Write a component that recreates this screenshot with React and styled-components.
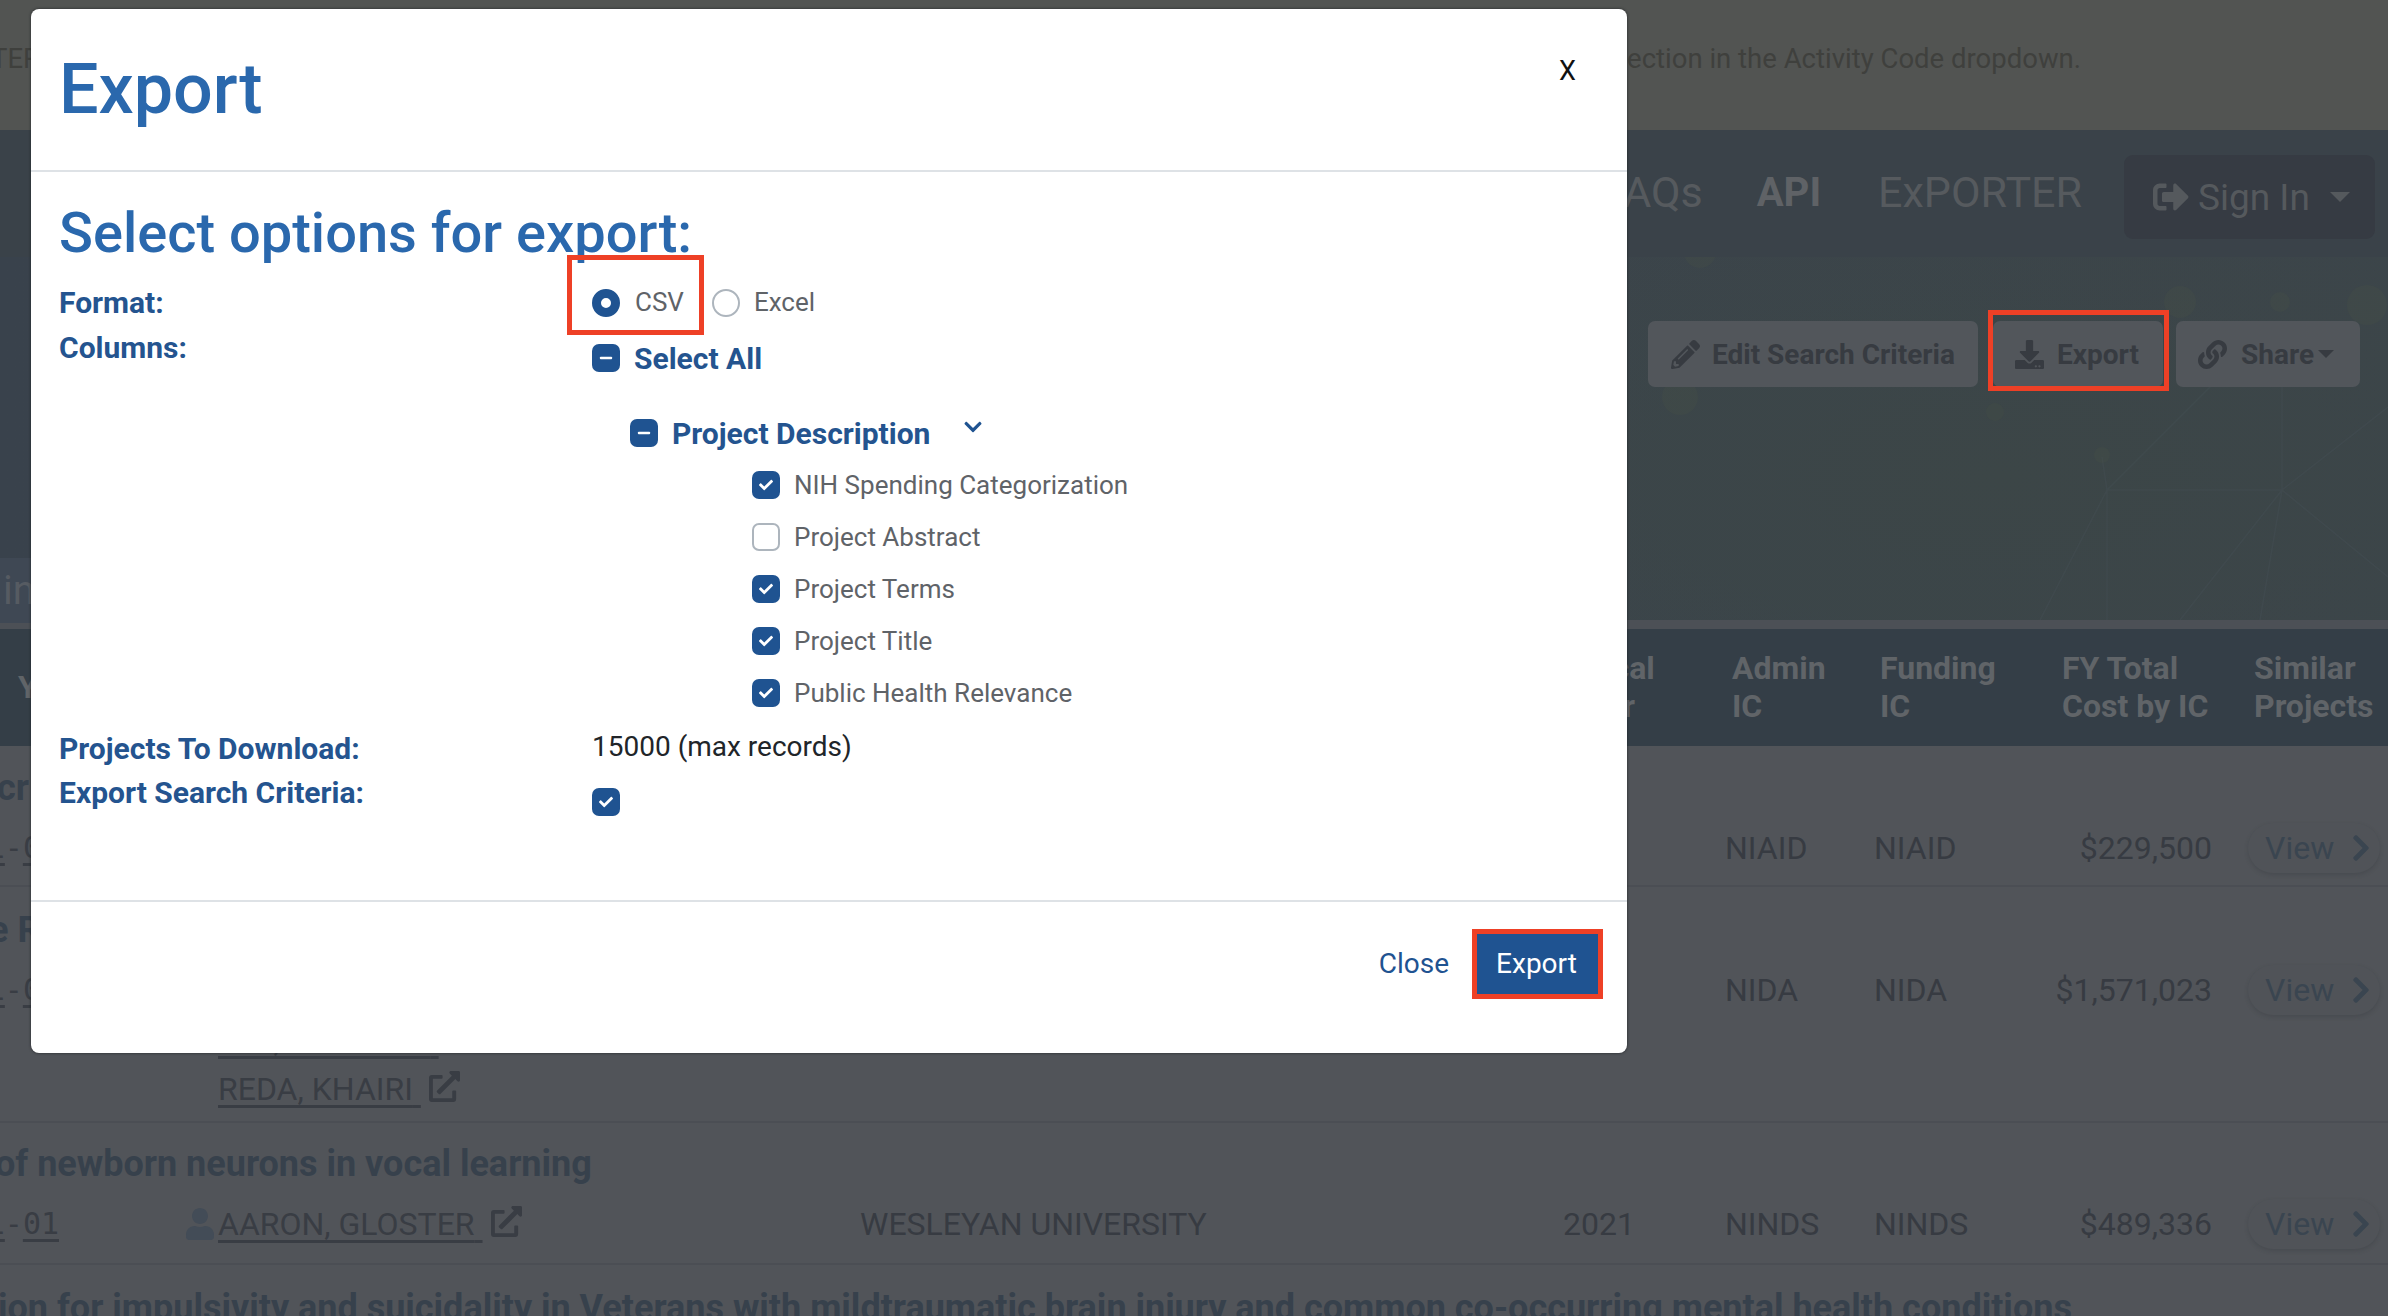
import React from "react";
import styled, { createGlobalStyle } from "styled-components";
import {
  FaPencilAlt, FaDownload, FaLink, FaSignOutAlt, FaExternalLinkAlt, FaUser,
  FaChevronDown, FaChevronRight, FaCheck, FaMinus,
} from "react-icons/fa";

const Global = createGlobalStyle`
  html, body { margin: 0; padding: 0; background: #515459; }
  body { font-family: Roboto, "Liberation Sans", sans-serif; }
  * { box-sizing: border-box; }
`;

const Page = styled.div`
  position: relative;
  width: 2388px;
  height: 1316px;
  overflow: hidden;
  background: #515459;
`;

/* ---------- dimmed page behind the dialog ---------- */
const Notice = styled.div`
  height: 130px;
  background: #525452;
  color: #3f403d;
  font-size: 27.5px;
  display: flex;
  align-items: center;
  justify-content: space-between;
  padding: 0 307px 14px 0;
  white-space: nowrap;
`;
const NoticeStart = styled.span`
  margin-left: -9px;
`;
const Nav = styled.nav`
  height: 127px;
  background: #3a4249;
  display: flex;
  align-items: center;
  justify-content: flex-end;
  padding: 7px 13px 0 0;
  gap: 57px;
`;
const NavLink = styled.a`
  color: ${(p) => (p.$strong ? "#5f6266" : "#565a5e")};
  font-size: ${(p) => (p.$strong ? 40 : 43)}px;
  font-weight: ${(p) => (p.$strong ? 700 : 400)};
  margin-bottom: 10px;
  margin-left: ${(p) => (p.$strong ? -3 : 0)}px;
`;
const SignIn = styled.button`
  width: 251px;
  height: 84px;
  margin-left: -15px;
  border: 0;
  border-radius: 9px;
  background: #363b43;
  color: #55595d;
  font: 400 37px Roboto, sans-serif;
  display: flex;
  align-items: center;
  padding: 0 0 0 29px;
  gap: 9px;
  svg { width: 36px; height: 36px; }
`;
const Caret = styled.i`
  display: inline-block;
  width: 0;
  height: 0;
  border-left: ${(p) => p.$size}px solid transparent;
  border-right: ${(p) => p.$size}px solid transparent;
  border-top: ${(p) => p.$size}px solid currentColor;
  margin-left: ${(p) => p.$gap}px;
`;
const Hero = styled.section`
  position: relative;
  height: 372px;
  border-bottom: 9px solid #4c5056;
  background:
    radial-gradient(ellipse 700px 300px at 2000px 220px, #3c4647 0%, rgba(60,70,71,0) 100%),
    linear-gradient(90deg, #39424c 0%, #3b444b 50%, #3c454a 100%);
  display: flex;
  flex-direction: column;
  justify-content: space-between;
`;
const HeroArt = styled.svg`
  position: absolute;
  inset: 0;
  width: 100%;
  height: 100%;
`;
const Tools = styled.div`
  position: relative;
  display: flex;
  justify-content: flex-end;
  gap: 13px;
  padding: 64px 28px 0 0;
`;
const ToolButton = styled.button`
  height: 66px;
  width: ${(p) => p.$w}px;
  margin-right: ${(p) => p.$after || 0}px;
  border: 0;
  border-radius: 7px;
  background: #52565b;
  color: #373b41;
  font: 700 28px Roboto, sans-serif;
  display: flex;
  align-items: center;
  padding: 0 0 0 ${(p) => p.$pad}px;
  gap: ${(p) => p.$gap}px;
  white-space: nowrap;
  svg { width: 29px; height: 29px; flex: none; }
`;
const SideTab = styled.div`
  position: relative;
  width: 31px;
  height: 65px;
  margin-bottom: -3px;
  background: #3f4854;
  color: #565b62;
  font-size: 40px;
  font-weight: 400;
  line-height: 65px;
  padding-left: 3px;
  overflow: hidden;
`;

const HeadRow = styled.div`
  height: 117px;
  padding-bottom: 2px;
  background: #343e47;
  color: #606468;
  font-size: 32px;
  font-weight: 700;
  line-height: 38px;
  display: grid;
  grid-template-columns: 18px 1552px 162px 148px 182px 192px 1fr;
  align-items: center;
`;
const HeadCell = styled.div`
  white-space: pre-line;
`;

const Row = styled.div`
  border-bottom: 2px solid #4b4e54;
  padding: ${(p) => p.$top}px 0 ${(p) => p.$bottom}px;
`;
const Title = styled.div`
  height: 44px;
  line-height: 44px;
  margin-left: ${(p) => p.$shift || 0}px;
  color: #37414c;
  font-size: 36px;
  font-weight: 700;
  white-space: nowrap;
`;
const Cells = styled.div`
  display: grid;
  grid-template-columns: 186px 674px 703px 162px 149px 166px 172px 1fr;
  margin-top: 14px;
  align-items: start;
  color: #373b42;
  font-size: 32px;
`;
const Cell = styled.div`
  height: 48px;
  line-height: 48px;
  white-space: nowrap;
  text-align: ${(p) => p.$align || "left"};
`;
const ProjectNo = styled.div`
  height: 48px;
  line-height: 48px;
  padding-right: 127px;
  display: flex;
  justify-content: flex-end;
  font-family: "DejaVu Sans Mono", monospace;
  font-size: 30px;
  white-space: nowrap;
  color: #393d44;
  u { text-underline-offset: 5px; text-decoration-thickness: 3px; }
`;
const People = styled.div`
  display: flex;
  flex-direction: column;
  gap: 1.5px;
`;
const Person = styled.div`
  position: relative;
  height: 48px;
  line-height: 48px;
  padding-left: 32px;
  display: flex;
  align-items: center;
  white-space: nowrap;
  color: #393d44;
  span { text-decoration: underline; text-underline-offset: 5px; text-decoration-thickness: 3px; white-space: pre; }
`;
const PersonIcon = styled(FaUser)`
  position: absolute;
  left: 0;
  top: 8px;
  width: 28px;
  height: 32px;
  color: #434c57;
`;
const LinkOut = styled(FaExternalLinkAlt)`
  width: 31px;
  height: 31px;
  margin: -6px 0 0 8px;
  color: #393d44;
`;
const ViewPill = styled.div`
  width: 132px;
  height: 50px;
  margin: -1px 0 0 36px;
  border-radius: 25px;
  background: #505358;
  box-shadow: 0 2px 4px rgba(40, 44, 50, 0.22);
  color: #3a4550;
  display: flex;
  align-items: center;
  padding-left: 17px;
  gap: 16px;
  svg { width: 22px; height: 30px; }
`;

/* ---------- dialog ---------- */
const Dialog = styled.div`
  position: absolute;
  left: 31px;
  top: 9px;
  width: 1596px;
  height: 1044px;
  background: #fff;
  border-radius: 8px;
  box-shadow: 0 0 3px rgba(30, 32, 36, 0.9);
  display: flex;
  flex-direction: column;
`;
const DialogHead = styled.header`
  height: 163px;
  flex: none;
  border-bottom: 2px solid #dee2e6;
  padding: 0 29px 0 28px;
  display: flex;
  justify-content: space-between;
`;
const DialogTitle = styled.h1`
  margin: 40px 0 0;
  color: #2a68ad;
  font-size: 70px;
  font-weight: 500;
  line-height: 80px;
`;
const CloseX = styled.span`
  margin: 41px 22px 0 0;
  font-size: 27px;
  line-height: 42px;
  color: #111;
`;
const DialogBody = styled.div`
  flex: 1;
  padding: 27px 29px 0 28px;
`;
const Heading = styled.h2`
  margin: 0 0 14px;
  color: #2a68ad;
  font-size: 56px;
  font-weight: 500;
  line-height: 68px;
`;
const FormGrid = styled.div`
  display: grid;
  grid-template-columns: 533px 1fr;
`;
const Label = styled.div`
  margin-top: ${(p) => p.$top || 0}px;
  color: #24548f;
  font-size: 30px;
  font-weight: 700;
  line-height: 44px;
`;
const Value = styled.div`
  padding-top: ${(p) => p.$top || 0}px;
`;
const RadioRow = styled.div`
  display: flex;
  align-items: center;
  height: 44px;
`;
const Radio = styled.span`
  width: 28px;
  height: 28px;
  flex: none;
  border-radius: 50%;
  background: #fff;
  border: ${(p) => (p.$on ? "9px solid #1f5391" : "2px solid #adb5bd")};
`;
const RadioText = styled.span`
  margin: -2px ${(p) => p.$after}px 0 ${(p) => p.$before}px;
  color: #5f6368;
  font-size: 26px;
`;
const Check = styled.span`
  width: 28px;
  height: 28px;
  flex: none;
  border-radius: 7px;
  display: flex;
  align-items: center;
  justify-content: center;
  color: #fff;
  background: ${(p) => (p.$off ? "#fff" : "#1f5391")};
  border: ${(p) => (p.$off ? "2px solid #adb5bd" : "0")};
  svg { width: 14px; height: 14px; }
`;
const Group = styled.div`
  display: flex;
  align-items: center;
  height: 44px;
  margin: ${(p) => p.$top || 0}px 0 0 ${(p) => p.$left || 0}px;
  gap: 14px;
  color: #24548f;
  font-size: 30px;
  font-weight: 700;
`;
const Chevron = styled(FaChevronDown)`
  width: 20px;
  height: 20px;
  margin: -12px 0 0 19px;
  color: #1f5391;
`;
const Items = styled.div`
  margin: 4px 0 0 160px;
`;
const Item = styled.div`
  display: flex;
  align-items: center;
  height: 52px;
  gap: 14px;
  color: #5f6368;
  font-size: 26px;
`;
const PlainValue = styled.div`
  margin-top: ${(p) => p.$top || 0}px;
  line-height: 44px;
  color: #212529;
  font-size: 28px;
`;
const Footer = styled.footer`
  height: 153px;
  flex: none;
  border-top: 2px solid #dee2e6;
  padding: 31px 28px 0 0;
  display: flex;
  justify-content: flex-end;
  align-items: flex-start;
  gap: 27px;
`;
const CloseLink = styled.a`
  height: 62px;
  line-height: 62px;
  color: #1f5391;
  font-size: 28px;
`;
const PrimaryButton = styled.button`
  width: 123px;
  height: 62px;
  margin-top: 1px;
  border: 0;
  background: #1f5391;
  color: #fff;
  font: 400 28px Roboto, sans-serif;
  padding: 0 2px 4px 0;
`;
const Callout = styled.div`
  position: absolute;
  left: ${(p) => p.$x}px;
  top: ${(p) => p.$y}px;
  width: ${(p) => p.$w}px;
  height: ${(p) => p.$h}px;
  border: 5px solid #ee4026;
  pointer-events: none;
`;

const checkedItems = [
  ["NIH Spending Categorization", false],
  ["Project Abstract", true],
  ["Project Terms", false],
  ["Project Title", false],
  ["Public Health Relevance", false],
];

function View() {
  return (
    <ViewPill>
      View <FaChevronRight />
    </ViewPill>
  );
}

function Name({ children, icon }) {
  return (
    <Person>
      {icon && <PersonIcon />}
      <span>{children} </span>
      <LinkOut />
    </Person>
  );
}

function Num({ tail }) {
  return (
    <ProjectNo>
      <u>1</u>-<u>{tail}</u>
    </ProjectNo>
  );
}

const hiddenName = "       ,                   ";

export default function App() {
  return (
    <Page>
      <Global />
      <Notice>
        <NoticeStart>TER</NoticeStart>
        <span>ection in the Activity Code dropdown.</span>
      </Notice>
      <Nav>
        <NavLink>AQs</NavLink>
        <NavLink $strong>API</NavLink>
        <NavLink>ExPORTER</NavLink>
        <SignIn>
          <FaSignOutAlt />
          Sign In
          <Caret $size={10} $gap={11} />
        </SignIn>
      </Nav>
      <Hero>
        <HeroArt viewBox="0 0 2388 363" preserveAspectRatio="none">
          <g stroke="#48535a" strokeWidth="1.5" fill="none" opacity="0.3">
            <path d="M2107 233L2282 233M2282 233L2388 150M2282 233L2388 320M2282 233L2260 363M2282 233L2282 100M2282 233L2180 363M2107 233L2040 363M2107 233L2102 200M2107 233L2230 110M2107 233L2107 363" />
          </g>
          <g fill="#465047" opacity="0.3">
            <circle cx="2102" cy="198" r="8" />
            <circle cx="1995" cy="155" r="9" />
            <circle cx="1680" cy="140" r="18" />
            <circle cx="2280" cy="45" r="10" />
            <circle cx="2367" cy="48" r="20" />
            <circle cx="2180" cy="45" r="16" />
            <circle cx="1700" cy="-5" r="16" />
          </g>
        </HeroArt>
        <Tools>
          <ToolButton $w={330} $pad={23} $gap={12} $after={2}>
            <FaPencilAlt />
            Edit Search Criteria
          </ToolButton>
          <ToolButton $w={170} $pad={22} $gap={13}>
            <FaDownload />
            Export
          </ToolButton>
          <ToolButton $w={184} $pad={22} $gap={14}>
            <FaLink />
            Share
            <Caret $size={8} $gap={-10} />
          </ToolButton>
        </Tools>
        <SideTab>in</SideTab>
      </Hero>
      <HeadRow>
        <span />
        <HeadCell>Y</HeadCell>
        <HeadCell>{"Fiscal\nYear"}</HeadCell>
        <HeadCell>{"Admin\nIC"}</HeadCell>
        <HeadCell>{"Funding\nIC"}</HeadCell>
        <HeadCell>{"FY Total\nCost by IC"}</HeadCell>
        <HeadCell>{"Similar\nProjects"}</HeadCell>
      </HeadRow>
      <Row $top={20} $bottom={12}>
        <Title $shift={-3}>cr</Title>
        <Cells>
          <Num tail="01" />
          <span />
          <span />
          <span />
          <Cell>NIAID</Cell>
          <Cell>NIAID</Cell>
          <Cell $align="right">$229,500</Cell>
          <View />
        </Cells>
      </Row>
      <Row $top={21} $bottom={8}>
        <Title $shift={-11}>e R</Title>
        <Cells>
          <Num tail="01" />
          <People>
            <Name>{hiddenName}</Name>
            <Name>{hiddenName}</Name>
            <Name>REDA, KHAIRI</Name>
          </People>
          <span />
          <span />
          <Cell>NIDA</Cell>
          <Cell>NIDA</Cell>
          <Cell $align="right">$1,571,023</Cell>
          <View />
        </Cells>
      </Row>
      <Row $top={19} $bottom={14}>
        <Title $shift={-5}>of newborn neurons in vocal learning</Title>
        <Cells>
          <Num tail="01" />
          <Name icon>AARON, GLOSTER</Name>
          <Cell>WESLEYAN UNIVERSITY</Cell>
          <Cell>2021</Cell>
          <Cell>NINDS</Cell>
          <Cell>NINDS</Cell>
          <Cell $align="right">$489,336</Cell>
          <View />
        </Cells>
      </Row>
      <Row $top={21} $bottom={0}>
        <Title $shift={-2}>ion for impulsivity and suicidality in Veterans with mildtraumatic brain injury and common co-occurring mental health conditions</Title>
      </Row>

      <Dialog>
        <DialogHead>
          <DialogTitle>Export</DialogTitle>
          <CloseX>X</CloseX>
        </DialogHead>
        <DialogBody>
          <Heading>Select options for export:</Heading>
          <FormGrid>
            <Label>Format:</Label>
            <RadioRow>
              <Radio $on />
              <RadioText $before={15} $after={28}>CSV</RadioText>
              <Radio />
              <RadioText $before={14} $after={0}>Excel</RadioText>
            </RadioRow>
            <Label $top={1}>Columns:</Label>
            <Value $top={11}>
              <Group>
                <Check><FaMinus /></Check>
                Select All
              </Group>
              <Group $top={31} $left={38}>
                <Check><FaMinus /></Check>
                Project Description
                <Chevron />
              </Group>
              <Items>
                {checkedItems.map(([text, off]) => (
                  <Item key={text}>
                    <Check $off={off}>{!off && <FaCheck />}</Check>
                    {text}
                  </Item>
                ))}
              </Items>
            </Value>
            <Label $top={8}>Projects To Download:</Label>
            <PlainValue $top={6}>15000 (max records)</PlainValue>
            <Label>Export Search Criteria:</Label>
            <Value $top={17}>
              <Check><FaCheck /></Check>
            </Value>
          </FormGrid>
        </DialogBody>
        <Footer>
          <CloseLink>Close</CloseLink>
          <PrimaryButton>Export</PrimaryButton>
        </Footer>
      </Dialog>

      <Callout $x={567} $y={255} $w={137} $h={80} />
      <Callout $x={1988} $y={310} $w={181} $h={81} />
      <Callout $x={1472} $y={929} $w={131} $h={70} />
    </Page>
  );
}
